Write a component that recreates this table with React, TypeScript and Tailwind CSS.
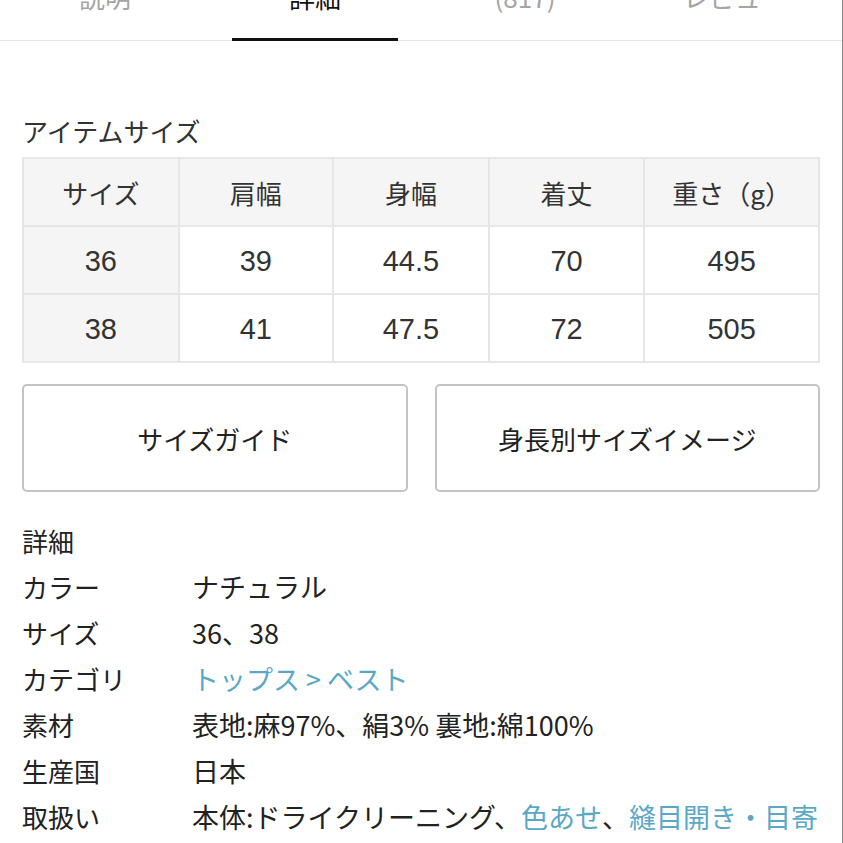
export default function App() {
  const tabs = ['説明', '詳細', '(817)', 'レビュー'];
  const headers = ['サイズ', '肩幅', '身幅', '着丈', '重さ（g）'];
  const rows = [
    ['36', '39', '44.5', '70', '495'],
    ['38', '41', '47.5', '72', '505'],
  ];
  const widths = ['w-[156px]', 'w-[155px]', 'w-[156px]', 'w-[156px]', 'w-[175px]'];

  return (
    <div
      className="w-[843px] h-[843px] overflow-hidden bg-white text-[#222] border-r border-[#8a8a8a]"
      style={{ fontFamily: '"Noto Sans CJK JP", "Noto Sans", sans-serif' }}
    >
      {/* tabs, mostly scrolled off the top */}
      <div className="flex -mt-[18px] border-b border-[#e6e6e6]">
        {tabs.map((t, i) => (
          <div key={t} className="w-[210px] px-[22px]">
            <div
              className={
                'text-center text-[26px] leading-[30px] ' +
                (i === 1 ? 'text-[#111] border-b-[3px] border-[#111] -mb-px pb-[26px]' : 'text-[#a5a5a5] pb-[28px]')
              }
            >
              {t}
            </div>
          </div>
        ))}
      </div>

      <div className="px-[22px]">
        <h2 className="mt-[72px] mb-[8px] text-[26px] leading-[36px] text-[#333]">アイテムサイズ</h2>

        <table className="border-collapse text-[26px] text-[#333]">
          <tbody>
            <tr className="bg-[#f5f5f5]">
              {headers.map((h, i) => (
                <td
                  key={h}
                  className={'h-[68px] border-2 border-[#e6e6e6] text-center p-0 ' + widths[i]}
                >
                  {h}
                </td>
              ))}
            </tr>
            {rows.map((r) => (
              <tr key={r[0]}>
                {r.map((c, i) => (
                  <td
                    key={i}
                    className={
                      'h-[68px] border-2 border-[#e6e6e6] text-center p-0 pt-[3px] ' +
                      widths[i] +
                      (i === 0 ? ' bg-[#f5f5f5]' : ' bg-white')
                    }
                  >
                    <span className="font-['Liberation_Sans'] text-[29px]">{c}</span>
                  </td>
                ))}
              </tr>
            ))}
          </tbody>
        </table>

        <div className="mt-[21px] flex gap-[27px]">
          <button className="w-[386px] h-[108px] rounded-[5px] border-2 border-[#c4c4c4] bg-white text-[26px] text-[#222]">
            サイズガイド
          </button>
          <button className="w-[386px] h-[108px] rounded-[5px] border-2 border-[#c4c4c4] bg-white text-[26px] text-[#222]">
            身長別サイズイメージ
          </button>
        </div>

        <div className="mt-[26px] text-[26px] leading-[46px]">
          <div>詳細</div>
          <dl>
            {[
              ['カラー', <span>ナチュラル</span>],
              ['サイズ', <span>36、38</span>],
              ['カテゴリ', <span className="text-[#5aa8c6]">トップス &gt; ベスト</span>],
              ['素材', <span>表地:麻97%、絹3% 裏地:綿100%</span>],
              ['生産国', <span>日本</span>],
              [
                '取扱い',
                <span className="whitespace-nowrap">
                  本体:ドライクリーニング、<span className="text-[#5aa8c6]">色あせ</span>、
                  <span className="text-[#5aa8c6]">縫目開き・目寄</span>
                </span>,
              ],
            ].map(([label, value], i) => (
              <div key={i} className="flex">
                <dt className="w-[170px] shrink-0">{label}</dt>
                <dd className="whitespace-nowrap text-[27px]">{value}</dd>
              </div>
            ))}
          </dl>
        </div>
      </div>
    </div>
  );
}
